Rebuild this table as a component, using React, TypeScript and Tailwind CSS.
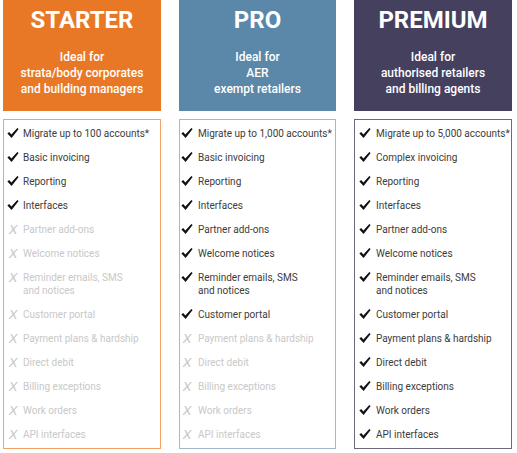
import React from "react";

type Item = { text: string[]; on: boolean };

function Check() {
  return (
    <svg width="12" height="12" viewBox="0 0 13 12" className="shrink-0">
      <path d="M0.4 6.6 L2.4 5.0 L4.7 7.6 L11.2 0.6 L12.6 1.8 L5.0 11.4 Z" fill="#111" />
    </svg>
  );
}

function Cross() {
  return (
    <span
      className="inline-block text-[13px] italic leading-[13px] text-[#c4c4c4]"
      style={{ fontFamily: '"Liberation Sans", Arial, sans-serif' }}
    >
      X
    </span>
  );
}

const base = (migrate: string, invoicing: string, on: boolean[]): Item[] => {
  const labels: string[][] = [
    [`Migrate up to ${migrate} accounts*`],
    [invoicing],
    ["Reporting"],
    ["Interfaces"],
    ["Partner add-ons"],
    ["Welcome notices"],
    ["Reminder emails, SMS", "and notices"],
    ["Customer portal"],
    ["Payment plans & hardship"],
    ["Direct debit"],
    ["Billing exceptions"],
    ["Work orders"],
    ["API interfaces"],
  ];
  return labels.map((t, i) => ({ text: t, on: on[i] }));
};

const plans = [
  {
    title: "STARTER",
    sub: ["Ideal for", "strata/body corporates", "and building managers"],
    bg: "bg-[#e97826]",
    border: "border-[#f2a167]",
    iconGap: "pl-[3px] gap-[4px]",
    width: "w-[158px]",
    items: base("100", "Basic invoicing", [true, true, true, true, false, false, false, false, false, false, false, false, false]),
  },
  {
    title: "PRO",
    sub: ["Ideal for", "AER", "exempt retailers"],
    bg: "bg-[#5b88a9]",
    border: "border-[#a3b8cb]",
    iconGap: "pl-[1px] gap-[5px]",
    width: "w-[157px]",
    items: base("1,000", "Basic invoicing", [true, true, true, true, true, true, true, true, false, false, false, false, false]),
  },
  {
    title: "PREMIUM",
    sub: ["Ideal for", "authorised retailers", "and billing agents"],
    bg: "bg-[#46405f]",
    border: "border-[#6c6880]",
    iconGap: "pl-[4px] gap-[5px]",
    width: "w-[158px]",
    items: base("5,000", "Complex invoicing", [true, true, true, true, true, true, true, true, true, true, true, true, true]),
  },
];

export default function App() {
  return (
    <div
      className="flex h-[453px] w-[517px] gap-[18px] bg-white pl-[3px]"
      style={{ fontFamily: 'Roboto, "Liberation Sans", Arial, sans-serif' }}
    >
      {plans.map((p) => (
        <div key={p.title} className={`flex flex-col ${p.width}`}>
          <div className={`flex h-[111px] flex-col items-center pt-[6px] text-white ${p.bg}`}>
            <div className="text-[24px] font-bold leading-[28px]">{p.title}</div>
            <div className="mt-[15px] flex flex-col items-center text-[12px] font-medium leading-[16px]">
              {p.sub.map((s) => (
                <div key={s}>{s}</div>
              ))}
            </div>
          </div>
          <div className={`mt-[8px] h-[330px] border ${p.border} pt-[1px]`}>
            {p.items.map((it, i) => (
              <div
                key={i}
                className={`flex items-start pt-[5.5px] pb-[5.5px] text-[10px] leading-[13px] ${p.iconGap} ${
                  it.on ? "text-[#3c3c3c]" : "text-[#c8c8c8]"
                }`}
              >
                <div className="flex h-[13px] w-[12px] shrink-0 items-center justify-center">
                  {it.on ? <Check /> : <Cross />}
                </div>
                <div>
                  {it.text.map((t) => (
                    <div key={t} className="whitespace-nowrap">
                      {t}
                    </div>
                  ))}
                </div>
              </div>
            ))}
          </div>
        </div>
      ))}
    </div>
  );
}
